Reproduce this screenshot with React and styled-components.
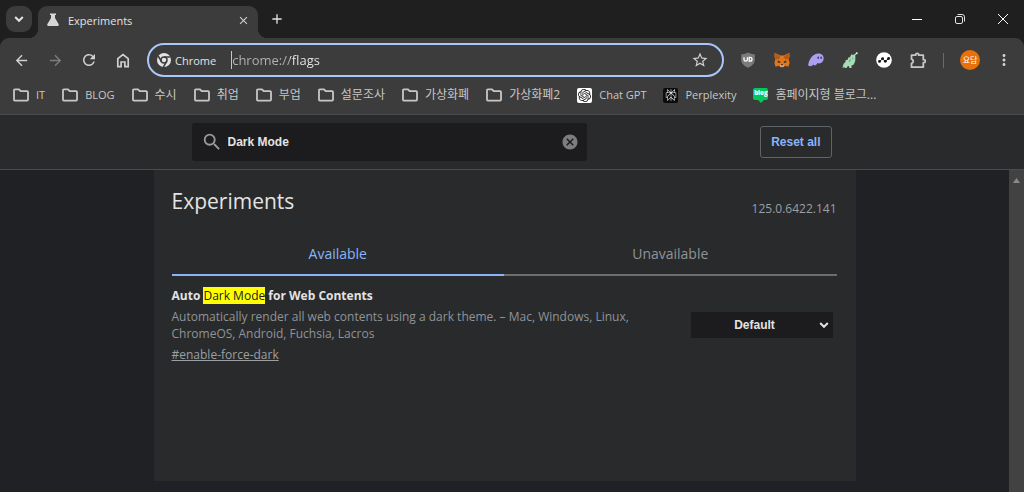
import React, { useState } from 'react'
import styled, { createGlobalStyle } from 'styled-components'
import {
  MdArrowBack,
  MdArrowForward,
  MdRefresh,
  MdStarBorder,
  MdSearch,
  MdCancel,
  MdMoreVert,
  MdClose,
  MdAdd,
} from 'react-icons/md'
import { SiOpenai, SiPerplexity } from 'react-icons/si'

const GlobalStyle = createGlobalStyle`
  * {
    box-sizing: border-box;
  }
  html, body, #root {
    height: 100%;
  }
  body {
    margin: 0;
    background: #202124;
    color: #e3e3e3;
    font-family: 'Open Sans', 'Noto Sans CJK KR', sans-serif;
    font-size: 12px;
    overflow: hidden;
  }
  button, input, select {
    font: inherit;
    color: inherit;
    margin: 0;
    padding: 0;
    border: none;
    outline: none;
    background: none;
  }
  h1, h2, p {
    margin: 0;
  }
`

const FlaskIcon = () => (
  <svg width='12' height='14' viewBox='0 0 12 14' fill='#d6d6d6'>
    <path d='M3 .5h6v1.4H8v3.2l3.600 6c.5 1-.1 2-1.200 2H1.600c-1.100 0-1.700-1-1.200-2L4 5.100V1.900H3z' />
  </svg>
)

const ChevronIcon = () => (
  <svg width='10' height='10' viewBox='0 0 10 10' fill='none' stroke='currentColor' strokeWidth='2'>
    <path d='M1.2 3 5 6.8 8.8 3' />
  </svg>
)

const HomeIcon = () => (
  <svg width='14' height='15' viewBox='0 0 14 15' fill='none' stroke='currentColor' strokeWidth='1.7'>
    <path d='M1.8 5.7 7 1.6l5.2 4.1v8H8.9V9H5.1v4.7H1.8z' />
  </svg>
)

const FolderIcon = () => (
  <svg width='16' height='14' viewBox='0 0 16 14' fill='none' stroke='#c7c7c7' strokeWidth='1.8' strokeLinejoin='round'>
    <path d='M1 2.2Q1 1.3 1.9 1.3H6l1.7 1.9h6.4q.9 0 .9.9v7.7q0 .9-.9.9H1.9q-.9 0-.9-.9z' />
  </svg>
)

const ChromeIcon = () => (
  <svg width='14' height='14' viewBox='0 0 14 14'>
    <circle cx='7' cy='7' r='7' fill='#e3e3e3' />
    <circle cx='7' cy='7' r='3' fill='none' stroke='#3c3c3c' strokeWidth='1.5' />
    <path d='M7 4h6.400M9.600 8.500 6.400 14M4.400 8.500 1.200 3' stroke='#3c3c3c' strokeWidth='1.5' />
  </svg>
)

const PuzzleIcon = () => (
  <svg width='17' height='17' viewBox='0 0 17 17' fill='none' stroke='#c7c7c7' strokeWidth='1.8' strokeLinejoin='round'>
    <path d='M1.5 3.200h4.200V2.800a1.500 1.500 0 0 1 3 0v.4h4.600v4.500h.5a1.500 1.500 0 0 1 0 3h-.5v4.500H1.500v-3.700a2.200 2.200 0 0 0 0-4.300z' />
  </svg>
)

const ShieldIcon = () => (
  <svg width='16' height='16' viewBox='0 0 16 16'>
    <path d='M8 .4c2 1.3 4.2 1.7 6.8 1.8v5.2c0 3.8-2.5 6.3-6.8 8.3-4.3-2-6.8-4.5-6.8-8.3V2.2C3.8 2.1 6 1.7 8 .4z' fill='#7b7b7b' />
    <path d='M4 5.3v2.2q0 1.6 1.7 1.6t1.7-1.6V5.3M9.2 5.3v3.8h.7q2.1 0 2.1-1.9t-2.1-1.9z' fill='none' stroke='#fff' strokeWidth='1.3' />
  </svg>
)

const FoxIcon = () => (
  <svg width='16' height='16' viewBox='0 0 16 16'>
    <path d='M.8.7 6 3.5h4L15.2.7l.5 3.300-1 3.500.9 3.200-1.100 4-3.300-.9-1.700 1.500H6.500l-1.700-1.500-3.300.9-1.100-4 .9-3.200L.3 4z' fill='#e2761b' />
    <path d='m.8.7 5.5 4L5 7.3l-3.700.2zM15.2.7l-5.500 4L11 7.3l3.700.2z' fill='#b45a17' />
    <path d='m4 8.5 2.500 1.300-.7 1.200-2.300-.8zM12 8.500 9.500 9.800l.7 1.200 2.300-.8z' fill='#233447' />
    <path d='m6.4 12.5 1.600-.3 1.600.3.200 2H6.200z' fill='#d7c1b3' />
    <path d='M6.8 12.2h2.4l-.2 1.100H7z' fill='#161616' />
  </svg>
)

const GhostIcon = () => (
  <svg width='16' height='14' viewBox='0 0 16 14'>
    <path d='M.2 11.6C1.4 5.5 5.2.7 10.3.5c3.6-.1 5.6 2.2 5.4 5.3-.2 2.7-2.1 4.5-4.4 4.6-.8.1-1.3-.4-1.7-.5-.8 1.4-1.9 2.5-3 2.5-.8 0-1.1-.5-1-1.100-.8.900-1.700 1.800-3 1.900-1.500.1-2.600-.5-2.400-1.600z' fill='#ab9ff2' />
    <ellipse cx='10.2' cy='4.7' rx='.8' ry='1.2' fill='#3c3c4a' />
    <ellipse cx='13.1' cy='4.7' rx='.8' ry='1.2' fill='#3c3c4a' />
  </svg>
)

const DragonIcon = () => (
  <svg width='16' height='17' viewBox='0 0 16 17'>
    <path d='M.4 15.900 1.500 12l2-2.300.3-2 1.700.4 1-2.800 1.300.3 1.600-3.300 1.500.8L12.600 2l.8 2.800-.2 4.400-1.500 3.300-2.300 1.300.2 2.300H7.500l-.7-2-1.500.3-.6 1.700H2.800l-.4-1z' fill='#a6dcb5' />
    <path d='m12.3 4 2.200-2.800' stroke='#a6dcb5' strokeWidth='1.1' />
    <circle cx='14.8' cy='1.3' r='1' fill='#dff2e4' />
    <path d='m7 10 1.700-2.700M10.200 6.300h1' stroke='#4b7e5c' strokeWidth='.8' />
  </svg>
)

const WaveIcon = () => (
  <svg width='16' height='16' viewBox='0 0 16 16'>
    <circle cx='8' cy='8' r='7.8' fill='#fff' />
    <path d='m3.5 9.500 3-2.700 2.800 2.500 3.300-2.800' fill='none' stroke='#111' strokeWidth='1' />
    <g fill='#111'>
      <circle cx='3.5' cy='9.4' r='1.400' />
      <circle cx='6.6' cy='6.600' r='1.400' />
      <circle cx='9.3' cy='9.3' r='1.400' />
      <circle cx='12.6' cy='6.500' r='1.400' />
    </g>
  </svg>
)

const RestoreIcon = () => (
  <svg width='10' height='10' viewBox='0 0 10 10' fill='none' stroke='#e3e3e3' strokeWidth='1'>
    <rect x='.5' y='2.5' width='7' height='7' rx='1.5' />
    <path d='M2.5.5h4.600q2.400 0 2.400 2.400v4.600' />
  </svg>
)

const bookmarks = [
  { label: 'IT', latin: true },
  { label: 'BLOG', latin: true },
  { label: '수시' },
  { label: '취업' },
  { label: '부업' },
  { label: '설문조사' },
  { label: '가상화폐' },
  { label: '가상화폐2' },
  { label: 'Chat GPT', kind: 'gpt', latin: true },
  { label: 'Perplexity', kind: 'perplexity', latin: true },
  { label: '홈페이지형 블로그...', kind: 'blog' },
]

const BookmarkIcon = ({ kind }) => {
  if (kind === 'gpt') return <SiteIcon $bg='#fff' $color='#222'><SiOpenai size={13} /></SiteIcon>
  if (kind === 'perplexity') return <SiteIcon $bg='#0b0b0b' $color='#eee'><SiPerplexity size={12} /></SiteIcon>
  if (kind === 'blog') return <BlogIcon>blog</BlogIcon>
  return <FolderIcon />
}

const App = () => {
  const [query, setQuery] = useState('Dark Mode')
  const [url, setUrl] = useState('chrome://flags')
  const [active, setActive] = useState('Available')

  return (
    <Browser>
      <GlobalStyle />
      <TabStrip>
        <TabSearch aria-label='Search tabs'>
          <ChevronIcon />
        </TabSearch>
        <Tab>
          <FlaskIcon />
          <TabTitle>Experiments</TabTitle>
          <IconButton $size={16} aria-label='Close tab'>
            <MdClose size={13} />
          </IconButton>
        </Tab>
        <NewTab aria-label='New tab'>
          <MdAdd size={16} />
        </NewTab>
        <WindowControls>
          <WindowButton aria-label='Minimize'>
            <svg width='10' height='10' stroke='#fff'><path d='M0 5.5h10' /></svg>
          </WindowButton>
          <WindowButton aria-label='Restore'>
            <RestoreIcon />
          </WindowButton>
          <WindowButton aria-label='Close'>
            <svg width='10' height='10' stroke='#fff'><path d='m0 0 10 10M10 0 0 10' /></svg>
          </WindowButton>
        </WindowControls>
      </TabStrip>

      <Chrome>
        <Toolbar>
          <NavButtons>
            <IconButton $size={18} aria-label='Back'><MdArrowBack size={17} /></IconButton>
            <IconButton $size={18} $dim aria-label='Forward'><MdArrowForward size={17} /></IconButton>
            <IconButton $size={18} aria-label='Reload'><MdRefresh size={18} /></IconButton>
            <IconButton $size={18} aria-label='Home'><HomeIcon /></IconButton>
          </NavButtons>
          <AddressBar>
            <ChromeIcon />
            <SiteName>Chrome</SiteName>
            <UrlInput
              type='text'
              aria-label='Address'
              value={url}
              onChange={(e) => setUrl(e.target.value)}
            />
            <IconButton $size={18} aria-label='Bookmark this page'><MdStarBorder size={18} /></IconButton>
          </AddressBar>
          <Extensions>
            <IconButton $size={18} aria-label='Ad blocker'><ShieldIcon /></IconButton>
            <IconButton $size={18} aria-label='Fox wallet'><FoxIcon /></IconButton>
            <IconButton $size={18} aria-label='Ghost wallet'><GhostIcon /></IconButton>
            <IconButton $size={18} aria-label='Dragon wallet'><DragonIcon /></IconButton>
            <IconButton $size={18} aria-label='Wave wallet'><WaveIcon /></IconButton>
            <IconButton $size={18} aria-label='Extensions'><PuzzleIcon /></IconButton>
          </Extensions>
          <Divider />
          <Profile>요담</Profile>
          <IconButton $size={18} aria-label='Menu'><MdMoreVert size={20} /></IconButton>
        </Toolbar>
        <Bookmarks>
          {bookmarks.map(({ label, kind, latin }) => (
            <Bookmark href='#' key={label} $latin={latin}>
              <BookmarkIcon kind={kind} />
              {label}
            </Bookmark>
          ))}
        </Bookmarks>
      </Chrome>

      <FlagsHeader>
        <HeaderInner>
          <SearchBox>
            <MdSearch size={22} color='#9a9a9a' />
            <SearchInput
              type='text'
              aria-label='Search flags'
              value={query}
              onChange={(e) => setQuery(e.target.value)}
            />
            <IconButton $size={18} $dim aria-label='Clear search' onClick={() => setQuery('')}>
              <MdCancel size={18} />
            </IconButton>
          </SearchBox>
          <ResetButton>Reset all</ResetButton>
        </HeaderInner>
      </FlagsHeader>

      <Viewport>
        <PageArea>
          <Panel>
            <TitleRow>
              <Title>Experiments</Title>
              <Version>125.0.6422.141</Version>
            </TitleRow>
            <Tabs role='tablist'>
              {['Available', 'Unavailable'].map((name) => (
                <TabButton
                  key={name}
                  role='tab'
                  aria-selected={active === name}
                  $active={active === name}
                  onClick={() => setActive(name)}
                >
                  {name}
                </TabButton>
              ))}
            </Tabs>
            <Experiment>
              <Details>
                <Name>
                  Auto <Mark>Dark Mode</Mark> for Web Contents
                </Name>
                <Description>
                  Automatically render all web contents using a dark theme. – Mac, Windows, Linux,
                  ChromeOS, Android, Fuchsia, Lacros
                </Description>
                <Permalink href='#enable-force-dark'>#enable-force-dark</Permalink>
              </Details>
              <SelectWrap>
                <Select aria-label='Auto Dark Mode for Web Contents' defaultValue='Default'>
                  <option>Default</option>
                  <option>Enabled</option>
                  <option>Disabled</option>
                </Select>
                <SelectArrow>
                  <ChevronIcon />
                </SelectArrow>
              </SelectWrap>
            </Experiment>
          </Panel>
        </PageArea>
        <Scrollbar>
          <svg width='7' height='5' viewBox='0 0 7 5' fill='#8b8b8b'><path d='M3.5 0 7 5H0z' /></svg>
        </Scrollbar>
      </Viewport>
    </Browser>
  )
}

const Browser = styled.div`
  display: flex;
  flex-direction: column;
  height: 100%;
  background: #1f1f1f;
`

const IconButton = styled.button`
  display: flex;
  align-items: center;
  justify-content: center;
  flex: none;
  width: ${({ $size }) => $size}px;
  height: ${({ $size }) => $size}px;
  color: ${({ $dim }) => ($dim ? '#7d7d7d' : '#d0d0d0')};
`

const TabStrip = styled.div`
  display: flex;
  align-items: center;
  height: 38px;
  padding-left: 6px;
`

const TabSearch = styled.button`
  display: flex;
  align-items: center;
  justify-content: center;
  width: 26px;
  height: 26px;
  border-radius: 9px;
  background: #3c3c3c;
`

const Tab = styled.div`
  position: relative;
  display: flex;
  align-items: center;
  align-self: flex-end;
  gap: 9px;
  width: 220px;
  height: 32px;
  margin-left: 6px;
  padding: 0 7px 4px 9px;
  border-radius: 9px 9px 0 0;
  background: #3c3c3c;
  &::before,
  &::after {
    content: '';
    position: absolute;
    bottom: 0;
    width: 9px;
    height: 9px;
  }
  &::before {
    right: 100%;
    background: radial-gradient(circle at 0 0, transparent 9px, #3c3c3c 9px);
  }
  &::after {
    left: 100%;
    background: radial-gradient(circle at 100% 0, transparent 9px, #3c3c3c 9px);
  }
`

const TabTitle = styled.span`
  flex: 1;
  font-size: 11px;
`

const NewTab = styled.button`
  display: flex;
  align-items: center;
  justify-content: center;
  width: 26px;
  height: 26px;
  margin-left: 6px;
  color: #e3e3e3;
`

const WindowControls = styled.div`
  display: flex;
  margin-left: auto;
`

const WindowButton = styled.button`
  display: flex;
  align-items: center;
  justify-content: center;
  width: 43px;
  height: 38px;
`

const Chrome = styled.div`
  border-radius: 9px 9px 0 0;
  border-bottom: 1px solid #4b4b4b;
  background: #3c3c3c;
`

const Toolbar = styled.div`
  display: flex;
  align-items: center;
  height: 44px;
  padding: 0 11px 0 12px;
`

const NavButtons = styled.div`
  display: flex;
  gap: 16px;
  margin-right: 15px;
`

const AddressBar = styled.div`
  display: flex;
  align-items: center;
  flex: 1;
  gap: 4px;
  height: 34px;
  padding: 0 13px 0 8px;
  border: 2px solid #a8c7fa;
  border-radius: 17px;
  background: #3c3c3c;
`

const SiteName = styled.span`
  font-size: 11px;
`

const UrlInput = styled.input`
  flex: 1;
  min-width: 0;
  height: 18px;
  margin-left: 11px;
  border-left: 1px solid #c7c7c7;
  font-size: 13px;
  color: transparent;
  background: linear-gradient(to right, #b4b4b4 58px, #ececec 58px);
  background-clip: text;
`

const Extensions = styled.div`
  display: flex;
  gap: 16px;
  margin-left: 15px;
`

const Divider = styled.div`
  width: 1px;
  height: 15px;
  margin: 0 16px;
  background: #6a6a6a;
`

const Profile = styled.button`
  width: 20px;
  height: 20px;
  margin-right: 15px;
  border-radius: 50%;
  background: #e8710a;
  color: #fff;
  font-size: 8px;
  line-height: 20px;
`

const Bookmarks = styled.nav`
  display: flex;
  align-items: center;
  gap: 17px;
  height: 32px;
  padding: 0 13px 6px;
`

const Bookmark = styled.a`
  display: flex;
  align-items: center;
  gap: 7px;
  color: #c7c7c7;
  font-size: ${({ $latin }) => ($latin ? 11 : 12)}px;
  line-height: 18px;
  text-decoration: none;
  white-space: nowrap;
`

const SiteIcon = styled.span`
  display: flex;
  align-items: center;
  justify-content: center;
  width: 15px;
  height: 15px;
  border-radius: 2px;
  background: ${({ $bg }) => $bg};
  color: ${({ $color }) => $color};
`

const BlogIcon = styled.span`
  position: relative;
  width: 15px;
  height: 12px;
  margin-bottom: 2px;
  border-radius: 2px;
  background: #03c75a;
  color: #fff;
  font-size: 6px;
  font-weight: 800;
  line-height: 11px;
  text-align: center;
  &::after {
    content: '';
    position: absolute;
    top: 12px;
    left: 5px;
    border: 3px solid transparent;
    border-top-color: #03c75a;
    border-bottom: none;
  }
`

const FlagsHeader = styled.header`
  padding-right: 15px;
  border-bottom: 1px solid #4a4b4c;
  background: #292a2b;
`

const HeaderInner = styled.div`
  display: flex;
  align-items: center;
  justify-content: space-between;
  max-width: 702px;
  height: 54px;
  margin: 0 auto;
  padding: 0 24px 0 38px;
`

const SearchBox = styled.div`
  display: flex;
  align-items: center;
  gap: 5px;
  width: 395px;
  height: 38px;
  padding: 0 8px 0 9px;
  border-radius: 3px;
  background: #1c1c1e;
`

const SearchInput = styled.input`
  flex: 1;
  min-width: 0;
  font: bold 12px 'Liberation Sans', Arial, sans-serif;
`

const ResetButton = styled.button`
  height: 32px;
  padding: 0 10px;
  border: 1px solid #5f6365;
  border-radius: 3px;
  color: #8ab4f8;
  font: bold 12px 'Liberation Sans', Arial, sans-serif;
`

const Viewport = styled.div`
  display: flex;
  flex: 1;
`

const PageArea = styled.main`
  flex: 1;
  padding-bottom: 11px;
  background: #202124;
`

const Panel = styled.section`
  max-width: 702px;
  height: 100%;
  margin: 0 auto;
  padding: 14px 19px 0 18px;
  background: #292a2b;
`

const TitleRow = styled.div`
  display: flex;
  align-items: flex-end;
  justify-content: space-between;
`

const Title = styled.h1`
  font-size: 21px;
  font-weight: 400;
  line-height: 34px;
`

const Version = styled.span`
  color: #9aa0a6;
  line-height: 18px;
`

const Tabs = styled.div`
  display: flex;
  margin-top: 14px;
`

const TabButton = styled.button`
  flex: 1;
  height: 44px;
  border-bottom: 2px solid ${({ $active }) => ($active ? '#8ab4f8' : '#6b6d6f')};
  color: ${({ $active }) => ($active ? '#8ab4f8' : '#8f9499')};
  font-size: 14px;
`

const Experiment = styled.div`
  display: flex;
  align-items: center;
  justify-content: space-between;
  padding: 11px 4px 0 0;
`

const Details = styled.div`
  width: 460px;
`

const Name = styled.h2`
  font-size: 12px;
  font-weight: 700;
  line-height: 18px;
`

const Mark = styled.mark`
  background: #ff0;
  color: #202124;
  font-weight: 400;
`

const Description = styled.p`
  margin: 3px 0 4px;
  color: #8f9499;
  line-height: 17px;
`

const Permalink = styled.a`
  color: #9aa0a6;
  line-height: 16px;
`

const SelectWrap = styled.div`
  position: relative;
  width: 142px;
`

const Select = styled.select`
  display: block;
  width: 100%;
  height: 26px;
  padding-right: 14px;
  appearance: none;
  background: #1c1c1e;
  font: bold 12px 'Liberation Sans', Arial, sans-serif;
  text-align: center;
  text-align-last: center;
`

const SelectArrow = styled.span`
  position: absolute;
  top: 8px;
  right: 4px;
  display: flex;
  pointer-events: none;
`

const Scrollbar = styled.div`
  width: 15px;
  padding-top: 6px;
  background: #424242;
  text-align: center;
  line-height: 5px;
`

export default App
